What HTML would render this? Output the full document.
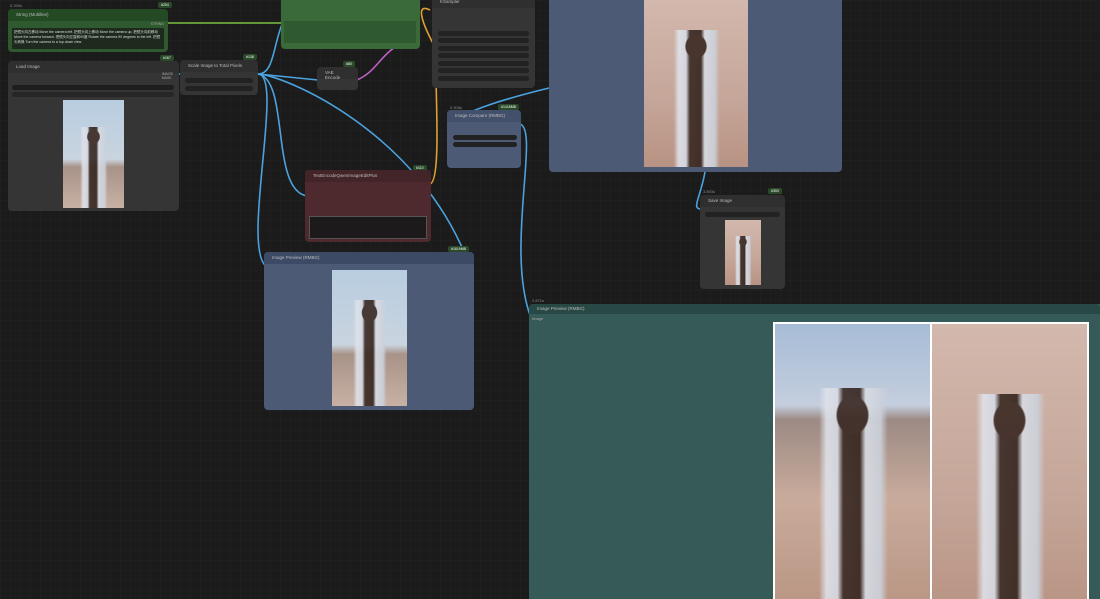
<!DOCTYPE html>
<html><head><meta charset="utf-8"><style>
*{margin:0;padding:0;box-sizing:border-box}
html,body{width:1100px;height:599px;overflow:hidden}
body{background:#1b1b1b;font-family:"Liberation Sans",sans-serif;position:relative;
background-image:linear-gradient(#1f1f1f 1px,transparent 1px),linear-gradient(90deg,#1f1f1f 1px,transparent 1px);background-size:10px 10px}
.n{position:absolute;border-radius:4px;background:#353535;color:#aaa;font-size:4px;overflow:hidden}
.t{height:12px;border-radius:4px 4px 0 0;padding:3px 8px;font-size:4.5px;color:#bbb}
.b{position:absolute;font-size:3.5px;background:#2a4a2a;color:#fff;padding:1px 3px;border-radius:2px}
.w{position:absolute;height:5px;background:#222;border-radius:3px}
.sky{background:linear-gradient(#b8cde0 0%,#c9d4df 55%,#a89388 62%,#c8b0a4 100%)}
.sand{background:linear-gradient(#d3b8ad,#c5a699 60%,#b89383)}
.fig{position:absolute;left:20%;width:60%;background:radial-gradient(ellipse 18% 9% at 50% 12%,#3a2822 90%,transparent 100%),linear-gradient(90deg,transparent 14%,#dfe2ea 22%,#d6dae4 34%,#3a2a24 40%,#34241e 58%,#d8dce4 64%,#ccd2dc 80%,transparent 88%);opacity:.9}
svg{position:absolute;left:0;top:0}
</style></head><body>
<svg width="1100" height="599" fill="none" stroke-width="1.6">
<path d="M168 23 L283 23" stroke="#7ac143"/>
<path d="M258 74 C280 74 270 20 298 5" stroke="#4aa3df"/>
<path d="M258 74 L318 80" stroke="#4aa3df"/>
<path d="M258 74 C285 74 240 250 267 267" stroke="#4aa3df"/>
<path d="M258 74 C290 80 270 190 307 196" stroke="#4aa3df"/>
<path d="M258 74 C280 74 420 130 470 267" stroke="#4aa3df"/>
<path d="M357 80 C380 70 380 50 410 40" stroke="#c060c8"/>
<path d="M430 184 C445 180 430 30 438 24" stroke="#e0a030"/>
<path d="M430 10 C410 0 430 40 440 55" stroke="#e0a030"/>
<path d="M449 123 C470 110 500 100 549 88" stroke="#4aa3df"/>
<path d="M520 124 C540 130 505 250 531 318" stroke="#4aa3df"/>
<path d="M705 172 C700 200 690 210 703 209" stroke="#4aa3df"/>
<path d="M180 74 L174 74" stroke="#4aa3df"/>
</svg>

<div style="position:absolute;left:10px;top:3px;font-size:4px;color:#888">0.330s</div>
<div class="b" style="left:158px;top:2px">#204</div>
<div class="n" style="left:8px;top:9px;width:160px;height:43px;background:#2f5a2f"><div class="t" style="background:#234a23">String (Multiline)</div>
<div style="position:absolute;right:4px;top:13px;font-size:3.5px">STRING</div>
<div style="position:absolute;left:4px;top:19px;width:152px;height:21px;background:#1d2a1d;color:#ddd;font-size:3.5px;padding:2px">把镜头向左移动 Move the camera left. 把镜头向上移动 Move the camera up. 把镜头向前移动 Move the camera forward. 把镜头向左旋转90度 Rotate the camera 90 degrees to the left. 把镜头转换 Turn the camera to a top-down view.</div></div>

<div class="b" style="left:160px;top:55px">#167</div>
<div class="n" style="left:8px;top:61px;width:171px;height:150px"><div class="t" style="background:#2f2f2f">Load Image</div>
<div style="position:absolute;right:6px;top:11px;font-size:3.5px">IMAGE<br>MASK</div>
<div class="w" style="left:4px;top:24px;width:162px;background:#1e1e1e"></div>
<div class="w" style="left:4px;top:31px;width:162px;background:#262626"></div>
<div class="sky" style="position:absolute;left:55px;top:39px;width:61px;height:108px;overflow:hidden"><div class="fig" style="top:25%;height:75%"></div></div></div>

<div class="b" style="left:243px;top:54px">#138</div>
<div class="n" style="left:180px;top:60px;width:78px;height:35px"><div class="t" style="background:#2f2f2f">Scale Image to Total Pixels</div>
<div class="w" style="left:5px;top:18px;width:68px"></div><div class="w" style="left:5px;top:26px;width:68px"></div></div>

<div class="n" style="left:281px;top:-4px;width:139px;height:53px;background:#3a6a3a"><div style="position:absolute;left:3px;top:25px;width:132px;height:22px;background:#2f5a2f"></div></div>

<div class="b" style="left:343px;top:61px">#80</div>
<div class="n" style="left:317px;top:67px;width:41px;height:23px"><div class="t" style="background:#2f2f2f">VAE Encode</div></div>

<div class="n" style="left:432px;top:-4px;width:103px;height:92px"><div class="t" style="background:#2f2f2f">KSampler</div>
<div class="w" style="left:6px;top:35px;width:91px"></div><div class="w" style="left:6px;top:42px;width:91px"></div><div class="w" style="left:6px;top:50px;width:91px"></div><div class="w" style="left:6px;top:57px;width:91px"></div><div class="w" style="left:6px;top:65px;width:91px"></div><div class="w" style="left:6px;top:72px;width:91px"></div><div class="w" style="left:6px;top:80px;width:91px"></div></div>

<div class="n" style="left:549px;top:-4px;width:293px;height:176px;background:#4c5a76">
<div class="sand" style="position:absolute;left:95px;top:4px;width:104px;height:167px;overflow:hidden"><div class="fig" style="top:18%;height:82%"></div></div></div>

<div style="position:absolute;left:450px;top:105px;font-size:4px;color:#888">0.308s</div>
<div class="b" style="left:498px;top:104px">#1418MB</div>
<div class="n" style="left:447px;top:110px;width:74px;height:58px;background:#4c5a76"><div class="t" style="background:#43506b">Image Compare (RMBG)</div>
<div class="w" style="left:6px;top:25px;width:64px"></div><div class="w" style="left:6px;top:32px;width:64px"></div></div>

<div class="b" style="left:413px;top:165px">#110</div>
<div class="n" style="left:305px;top:170px;width:126px;height:72px;background:#4e2a2e"><div class="t" style="background:#432428">TextEncodeQwenImageEditPlus</div>
<div style="position:absolute;left:4px;top:46px;width:118px;height:23px;background:#1c1a1a;border:1px solid #555"></div></div>

<div class="b" style="left:448px;top:246px">#1619MB</div>
<div class="n" style="left:264px;top:252px;width:210px;height:158px;background:#4c5a76"><div class="t" style="background:#3c4a66">Image Preview (RMBG)</div>
<div class="sky" style="position:absolute;left:68px;top:18px;width:75px;height:136px;overflow:hidden"><div class="fig" style="top:22%;height:78%"></div></div></div>

<div style="position:absolute;left:703px;top:189px;font-size:4px;color:#888">3.893s</div>
<div class="b" style="left:768px;top:188px">#393</div>
<div class="n" style="left:700px;top:195px;width:85px;height:94px"><div class="t" style="background:#2f2f2f">Save Image</div>
<div class="w" style="left:5px;top:17px;width:75px"></div>
<div class="sand" style="position:absolute;left:25px;top:25px;width:36px;height:65px;overflow:hidden"><div class="fig" style="top:25%;height:75%"></div></div></div>

<div style="position:absolute;left:532px;top:298px;font-size:4px;color:#888">2.871s</div>
<div class="n" style="left:529px;top:304px;width:571px;height:295px;background:#365a58;border-radius:4px 0 0 0"><div class="t" style="background:#284846;height:10px;padding:2px 8px">Image Preview (RMBG)</div>
<div style="position:absolute;left:3px;top:12px;font-size:4px">Image</div>
<div style="position:absolute;left:244px;top:18px;width:316px;height:290px;border:2px solid #fff;background:#fff">
<div class="sky" style="position:absolute;left:0;top:0;width:155px;height:290px;overflow:hidden;background:linear-gradient(#a6bcd6 0%,#c4cede 28%,#9c8a84 33%,#c9ab9c 60%,#b89482 100%)"><div class="fig" style="top:22%;height:78%"></div></div>
<div class="sand" style="position:absolute;left:157px;top:0;width:155px;height:290px;overflow:hidden"><div class="fig" style="top:24%;height:76%"></div></div>
</div></div>
</body></html>
